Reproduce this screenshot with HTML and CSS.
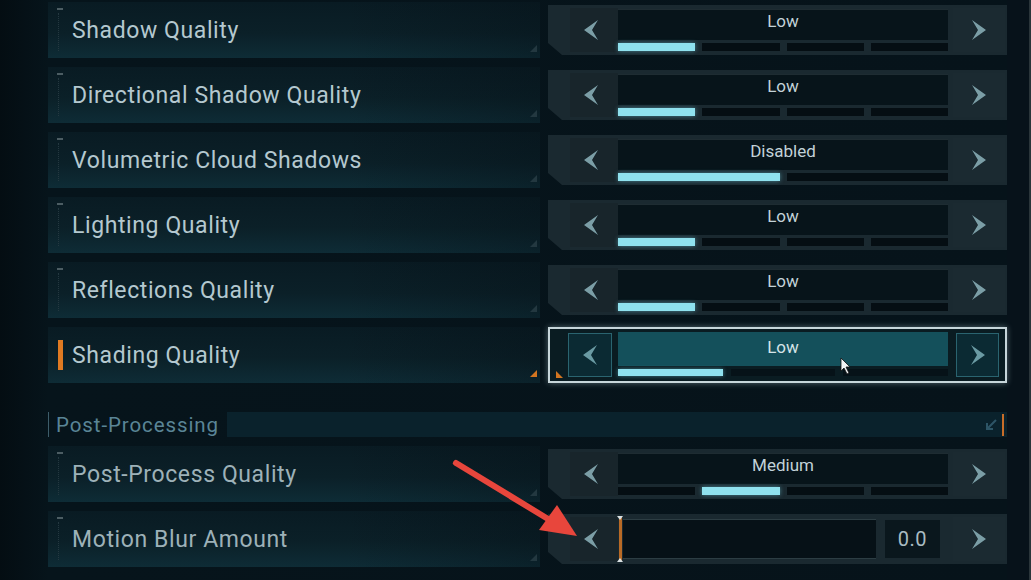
FILE: index.html
```html
<!DOCTYPE html>
<html lang="en">
<head>
	<meta charset="UTF-8" />
	<title>Graphics Settings</title>
	<link rel="stylesheet" href="styles.css">
</head>
<body>
	<div class="screen">
		<div class="settings">
			<div class="row">
				<div class="label"><span class="tick"></span>Shadow Quality<span class="corner"></span></div>
				<div class="control">
					<div class="btn left"><svg viewBox="0 0 14 20"><polygon points="14,0 0,10 14,20 8,10"/></svg></div>
					<div class="value">
						<div class="value-text">Low</div>
						<div class="segments"><span class="seg on"></span><span class="seg"></span><span class="seg"></span><span class="seg"></span></div>
					</div>
					<div class="btn right"><svg viewBox="0 0 14 20"><polygon points="0,0 14,10 0,20 6,10"/></svg></div>
				</div>
			</div>

			<div class="row">
				<div class="label"><span class="tick"></span>Directional Shadow Quality<span class="corner"></span></div>
				<div class="control">
					<div class="btn left"><svg viewBox="0 0 14 20"><polygon points="14,0 0,10 14,20 8,10"/></svg></div>
					<div class="value">
						<div class="value-text">Low</div>
						<div class="segments"><span class="seg on"></span><span class="seg"></span><span class="seg"></span><span class="seg"></span></div>
					</div>
					<div class="btn right"><svg viewBox="0 0 14 20"><polygon points="0,0 14,10 0,20 6,10"/></svg></div>
				</div>
			</div>

			<div class="row">
				<div class="label"><span class="tick"></span>Volumetric Cloud Shadows<span class="corner"></span></div>
				<div class="control">
					<div class="btn left"><svg viewBox="0 0 14 20"><polygon points="14,0 0,10 14,20 8,10"/></svg></div>
					<div class="value">
						<div class="value-text">Disabled</div>
						<div class="segments"><span class="seg on"></span><span class="seg"></span></div>
					</div>
					<div class="btn right"><svg viewBox="0 0 14 20"><polygon points="0,0 14,10 0,20 6,10"/></svg></div>
				</div>
			</div>

			<div class="row">
				<div class="label"><span class="tick"></span>Lighting Quality<span class="corner"></span></div>
				<div class="control">
					<div class="btn left"><svg viewBox="0 0 14 20"><polygon points="14,0 0,10 14,20 8,10"/></svg></div>
					<div class="value">
						<div class="value-text">Low</div>
						<div class="segments"><span class="seg on"></span><span class="seg"></span><span class="seg"></span><span class="seg"></span></div>
					</div>
					<div class="btn right"><svg viewBox="0 0 14 20"><polygon points="0,0 14,10 0,20 6,10"/></svg></div>
				</div>
			</div>

			<div class="row">
				<div class="label"><span class="tick"></span>Reflections Quality<span class="corner"></span></div>
				<div class="control">
					<div class="btn left"><svg viewBox="0 0 14 20"><polygon points="14,0 0,10 14,20 8,10"/></svg></div>
					<div class="value">
						<div class="value-text">Low</div>
						<div class="segments"><span class="seg on"></span><span class="seg"></span><span class="seg"></span><span class="seg"></span></div>
					</div>
					<div class="btn right"><svg viewBox="0 0 14 20"><polygon points="0,0 14,10 0,20 6,10"/></svg></div>
				</div>
			</div>

			<div class="row selected">
				<div class="label"><span class="tick"></span>Shading Quality<span class="corner"></span></div>
				<div class="control">
					<div class="btn left"><svg viewBox="0 0 14 20"><polygon points="14,0 0,10 14,20 8,10"/></svg></div>
					<div class="value">
						<div class="value-text">Low</div>
						<div class="segments"><span class="seg on"></span><span class="seg"></span><span class="seg"></span></div>
					</div>
					<div class="btn right"><svg viewBox="0 0 14 20"><polygon points="0,0 14,10 0,20 6,10"/></svg></div>
					<svg class="cursor" viewBox="0 0 12 18"><polygon points="1,1 1,14 4,11 7,17 9,16 6,10 10,10"/></svg>
				</div>
			</div>

			<div class="section">
				<span class="section-title">Post-Processing</span>
				<div class="section-bar">
					<svg class="collapse" viewBox="0 0 14 14"><path d="M12 2 L3 11 M3 5 L3 11 L9 11"/></svg>
					<span class="mark-orange"></span>
					<span class="mark-white"></span>
				</div>
			</div>

			<div class="row">
				<div class="label dim"><span class="tick"></span>Post-Process Quality<span class="corner"></span></div>
				<div class="control">
					<div class="btn left"><svg viewBox="0 0 14 20"><polygon points="14,0 0,10 14,20 8,10"/></svg></div>
					<div class="value">
						<div class="value-text">Medium</div>
						<div class="segments"><span class="seg"></span><span class="seg on"></span><span class="seg"></span><span class="seg"></span></div>
					</div>
					<div class="btn right"><svg viewBox="0 0 14 20"><polygon points="0,0 14,10 0,20 6,10"/></svg></div>
				</div>
			</div>

			<div class="row">
				<div class="label dim"><span class="tick"></span>Motion Blur Amount<span class="corner"></span></div>
				<div class="control slider">
					<div class="btn left"><svg viewBox="0 0 14 20"><polygon points="14,0 0,10 14,20 8,10"/></svg></div>
					<div class="track"><span class="handle"></span></div>
					<div class="amount">0.0</div>
					<div class="btn right"><svg viewBox="0 0 14 20"><polygon points="0,0 14,10 0,20 6,10"/></svg></div>
				</div>
			</div>
		</div>
		<div class="scrollbar"></div>

		<svg class="pointer" viewBox="0 0 140 90">
			<line x1="3" y1="3" x2="100" y2="62" />
			<polygon points="124,76 86,70 104,45" />
		</svg>
	</div>
</body>
</html>
```

FILE: styles.css
```css
* {
	box-sizing: border-box;
	margin: 0;
	padding: 0;
}

body {
	background: #050f15;
	font-family: Roboto, 'Liberation Sans', sans-serif;
	width: 1031px;
	height: 580px;
	overflow: hidden;
}

.screen {
	position: relative;
	display: flex;
	height: 580px;
	background: linear-gradient(to right, #040d12 0, #06141b 48px, #06131a 100%);
}

.settings {
	display: flex;
	flex-direction: column;
	gap: 9px;
	padding: 2px 0 0 48px;
	width: 1007px;
}

.row {
	display: grid;
	grid-template-columns: 492px 459px;
	column-gap: 8px;
	height: 56px;
	align-items: center;
}

/* label side */
.label {
	position: relative;
	height: 56px;
	display: flex;
	align-items: center;
	padding-left: 24px;
	font-size: 23px;
	letter-spacing: 0.6px;
	color: #b4c8cf;
	background:
		linear-gradient(to right, rgba(5, 15, 21, 0) 60%, rgba(5, 15, 21, 0.35) 100%),
		linear-gradient(to bottom, #091b23 0%, #0b2028 55%, #0e2c36 100%);
}

.label.dim {
	color: #9db1b8;
}

.tick {
	position: absolute;
	left: 9px;
	top: 6px;
	width: 6px;
	height: 2px;
	background: #4c5d63;
}

.tick::after {
	content: '';
	position: absolute;
	left: 1px;
	top: 5px;
	width: 1px;
	height: 38px;
	border-left: 1px dotted #243840;
}

.corner {
	position: absolute;
	right: 3px;
	bottom: 6px;
	width: 0;
	height: 0;
	border-left: 7px solid transparent;
	border-bottom: 7px solid #233840;
}

.selected .tick {
	left: 10px;
	top: 13px;
	width: 5px;
	height: 30px;
	background: #e07a22;
}

.selected .tick::after {
	display: none;
}

.selected .corner {
	border-bottom-color: #d37520;
}

/* control side */
.control {
	position: relative;
	height: 50px;
	display: grid;
	grid-template-columns: 70px 330px 59px;
	background: #1a2930;
	clip-path: polygon(0 0, 100% 0, 100% 100%, 14px 100%, 0 calc(100% - 12px));
}

.control::before {
	content: '';
	position: absolute;
	left: 0;
	bottom: 0;
	width: 0;
	height: 0;
	border-right: 7px solid transparent;
	border-bottom: 7px solid #2f3f46;
}

.btn {
	display: flex;
	align-items: center;
	justify-content: center;
}

.btn svg {
	width: 14px;
	height: 20px;
	fill: #7b9ea6;
}

.btn.left {
	margin: 3px 0 3px 22px;
	padding-right: 7px;
	background: #18252b;
}

.btn.right {
	margin: 3px 2px 3px 5px;
	background: #1b2a31;
}

.value {
	display: flex;
	flex-direction: column;
	gap: 3px;
	padding: 4px 0;
}

.value-text {
	height: 31px;
	background: #07141a;
	border-top: 1px solid #1e2c32;
	color: #c2d2d8;
	font-size: 17px;
	text-align: center;
	line-height: 23px;
}

.segments {
	display: flex;
	gap: 7px;
	height: 8px;
}

.seg {
	flex: 1;
	background: #050e13;
}

.seg.on {
	background: #8fe1ee;
	box-shadow: 0 0 4px rgba(120, 220, 240, 0.5);
}

/* highlighted row */
.selected .control {
	height: 56px;
	background: #0a1c22;
	border: 2px solid #c7d6da;
	box-shadow: 0 0 6px rgba(200, 230, 235, 0.4);
	clip-path: none;
	grid-template-columns: 68px 330px 57px;
}

.selected .control::before {
	left: 6px;
	bottom: 3px;
	border-bottom-color: #d37520;
}

.selected .btn.left {
	margin: 4px 6px 4px 18px;
	padding-right: 0;
	background: #0b2a33;
	border: 1px solid #2a6470;
}

.selected .btn.right {
	margin: 4px 6px 4px 8px;
	background: #0b2a33;
	border: 1px solid #2a6470;
}

.selected .btn svg {
	fill: #6a9aa3;
}

.selected .value {
	padding: 3px 0 5px;
}

.selected .value-text {
	height: 34px;
	background: #14505b;
	border-top: none;
	color: #d4e4e8;
	line-height: 30px;
}

.selected .segments {
	height: 7px;
	gap: 8px;
}

.selected .seg {
	background: #061218;
}

.selected .seg.on {
	background: #8fe1ee;
}

.cursor {
	position: absolute;
	left: 290px;
	top: 28px;
	width: 12px;
	height: 18px;
	fill: #f2f5f6;
	stroke: #111;
	stroke-width: 0.8;
}

/* slider */
.slider {
	grid-template-columns: 70px 260px 70px 59px;
}

.track {
	position: relative;
	margin: 5px 2px 5px 5px;
	background: #061117;
	border-top: 1px solid #2c3d43;
	border-bottom: 1px solid #2c3d43;
}

.handle {
	position: absolute;
	left: -4px;
	top: -4px;
	bottom: -4px;
	width: 3px;
	background: #b86a26;
}

.handle::before,
.handle::after {
	content: '';
	position: absolute;
	left: -2px;
	border-left: 3.5px solid transparent;
	border-right: 3.5px solid transparent;
}

.handle::before {
	top: 0;
	border-top: 4px solid #d8e0e2;
}

.handle::after {
	bottom: 0;
	border-bottom: 4px solid #d8e0e2;
}

.amount {
	margin: 6px 8px 6px 7px;
	background: #0a171d;
	color: #a9bcc2;
	font-size: 20px;
	letter-spacing: 0.5px;
	display: flex;
	align-items: center;
	justify-content: center;
}

/* section header */
.section {
	display: flex;
	align-items: center;
	height: 25px;
	margin-top: 20px;
	border-left: 1px solid #3d5d6a;
}

.section-title {
	padding: 0 8px 0 7px;
	font-size: 20.5px;
	color: #5a8596;
	letter-spacing: 0.9px;
}

.section-bar {
	flex: 1;
	height: 25px;
	background: #0a222c;
	display: flex;
	align-items: center;
	justify-content: flex-end;
	gap: 3px;
	margin-right: -2px;
}

.collapse {
	width: 14px;
	height: 14px;
	fill: none;
	stroke: #2d5566;
	stroke-width: 2;
	margin-right: 1px;
}

.mark-orange {
	width: 2px;
	height: 22px;
	background: #c86d28;
}

.mark-white {
	width: 1px;
	height: 22px;
	background: #8a9ba1;
	margin-left: 1px;
}

.scrollbar {
	width: 24px;
	border-right: 2px solid #2a353a;
	background: #07121a;
}

.pointer {
	position: absolute;
	left: 453px;
	top: 460px;
	width: 140px;
	height: 90px;
	overflow: visible;
}

.pointer line {
	stroke: #e8463c;
	stroke-width: 6;
	stroke-linecap: round;
}

.pointer polygon {
	fill: #e8463c;
}
```
